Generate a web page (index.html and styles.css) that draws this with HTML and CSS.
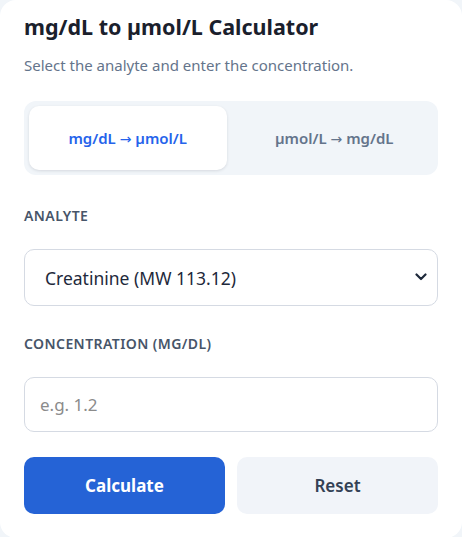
FILE: index.html
```html
<!DOCTYPE html>
<html lang="en">
<head>
    <meta charset="UTF-8">
    <meta name="viewport" content="width=device-width, initial-scale=1.0">
    <title>mg/dL to µmol/L Calculator</title>
    <link rel="stylesheet" href="styles.css">
</head>
<body>

    <div class="card">
        <h1>mg/dL to µmol/L Calculator</h1>
        <p class="hint">Select the analyte and enter the concentration.</p>

        <div class="tabs">
            <button class="tab active">mg/dL <span class="arrow">→</span> µmol/L</button>
            <button class="tab">µmol/L <span class="arrow">→</span> mg/dL</button>
        </div>

        <label class="label" for="analyte">Analyte</label>
        <div class="select-wrap">
            <select id="analyte" class="field">
                <option>Creatinine (MW 113.12)</option>
                <option>Urea (MW 60.06)</option>
                <option>Glucose (MW 180.16)</option>
                <option>Uric acid (MW 168.11)</option>
            </select>
            <svg class="chevron" width="12" height="8" viewBox="0 0 12 8">
                <path d="M1.5 1.5 L6 6 L10.5 1.5" fill="none" stroke="#1e293b" stroke-width="2.2" stroke-linecap="round" stroke-linejoin="round"/>
            </svg>
        </div>

        <label class="label" for="conc">Concentration (mg/dL)</label>
        <input id="conc" class="field" type="text" placeholder="e.g. 1.2">

        <div class="actions">
            <button class="btn primary">Calculate</button>
            <button class="btn secondary">Reset</button>
        </div>
    </div>

</body>
</html>
```

FILE: styles.css
```css
body {
    margin: 0;
    background: #f1f5f9;
    font-family: "Noto Sans", "Open Sans", sans-serif;
    color: #1e293b;
}
.card {
    background: #fff;
    border-radius: 16px;
    padding: 12px 24px 24px;
    min-height: 537px;
    box-sizing: border-box;
}
h1 {
    font-size: 21.5px;
    font-weight: 700;
    color: #1a202c;
    margin: 0 0 13px;
    line-height: 30px;
}
.hint {
    font-size: 15px;
    color: #64748b;
    margin: 0 0 26px;
    line-height: 20px;
}
.tabs {
    display: flex;
    background: #f1f5f9;
    border-radius: 12px;
    padding: 5px;
    gap: 9px;
    margin-bottom: 32px;
}
.tab {
    flex: 1;
    height: 64px;
    border: none;
    border-radius: 10px;
    background: transparent;
    font-family: inherit;
    font-size: 15px;
    font-weight: 600;
    color: #64748b;
}
.tab.active {
    background: #fff;
    color: #2563eb;
    box-shadow: 0 1px 3px rgba(15, 23, 42, 0.12);
}
.arrow {
    font-family: "DejaVu Sans", sans-serif;
    font-weight: 400;
    font-size: 14px;
}
.label {
    display: block;
    font-size: 14px;
    font-weight: 600;
    color: #475569;
    text-transform: uppercase;
    letter-spacing: 0.03em;
    line-height: 18px;
    margin-bottom: 24px;
}
.field {
    display: block;
    width: 100%;
    box-sizing: border-box;
    border: 1px solid #d5dae3;
    border-radius: 10px;
    background: #fff;
    font-family: inherit;
    font-size: 17.5px;
    color: #1e293b;
    margin-bottom: 29px;
}
.select-wrap {
    position: relative;
}
select.field {
    height: 57px;
    padding: 0 40px 0 20px;
    appearance: none;
    -webkit-appearance: none;
}
.chevron {
    position: absolute;
    right: 11px;
    top: 24px;
    pointer-events: none;
}
input.field {
    height: 55px;
    padding: 0 15px;
    font-size: 17px;
    margin-bottom: 25px;
}
input.field::placeholder {
    color: #8b8b8b;
}
.actions {
    display: flex;
    gap: 12px;
}
.btn {
    flex: 1;
    height: 57px;
    border: none;
    border-radius: 10px;
    font-family: inherit;
    font-size: 17px;
    font-weight: 700;
    cursor: pointer;
}
.primary {
    background: #2563d6;
    color: #fff;
}
.secondary {
    background: #f1f4f9;
    color: #334155;
    font-weight: 600;
}
```
